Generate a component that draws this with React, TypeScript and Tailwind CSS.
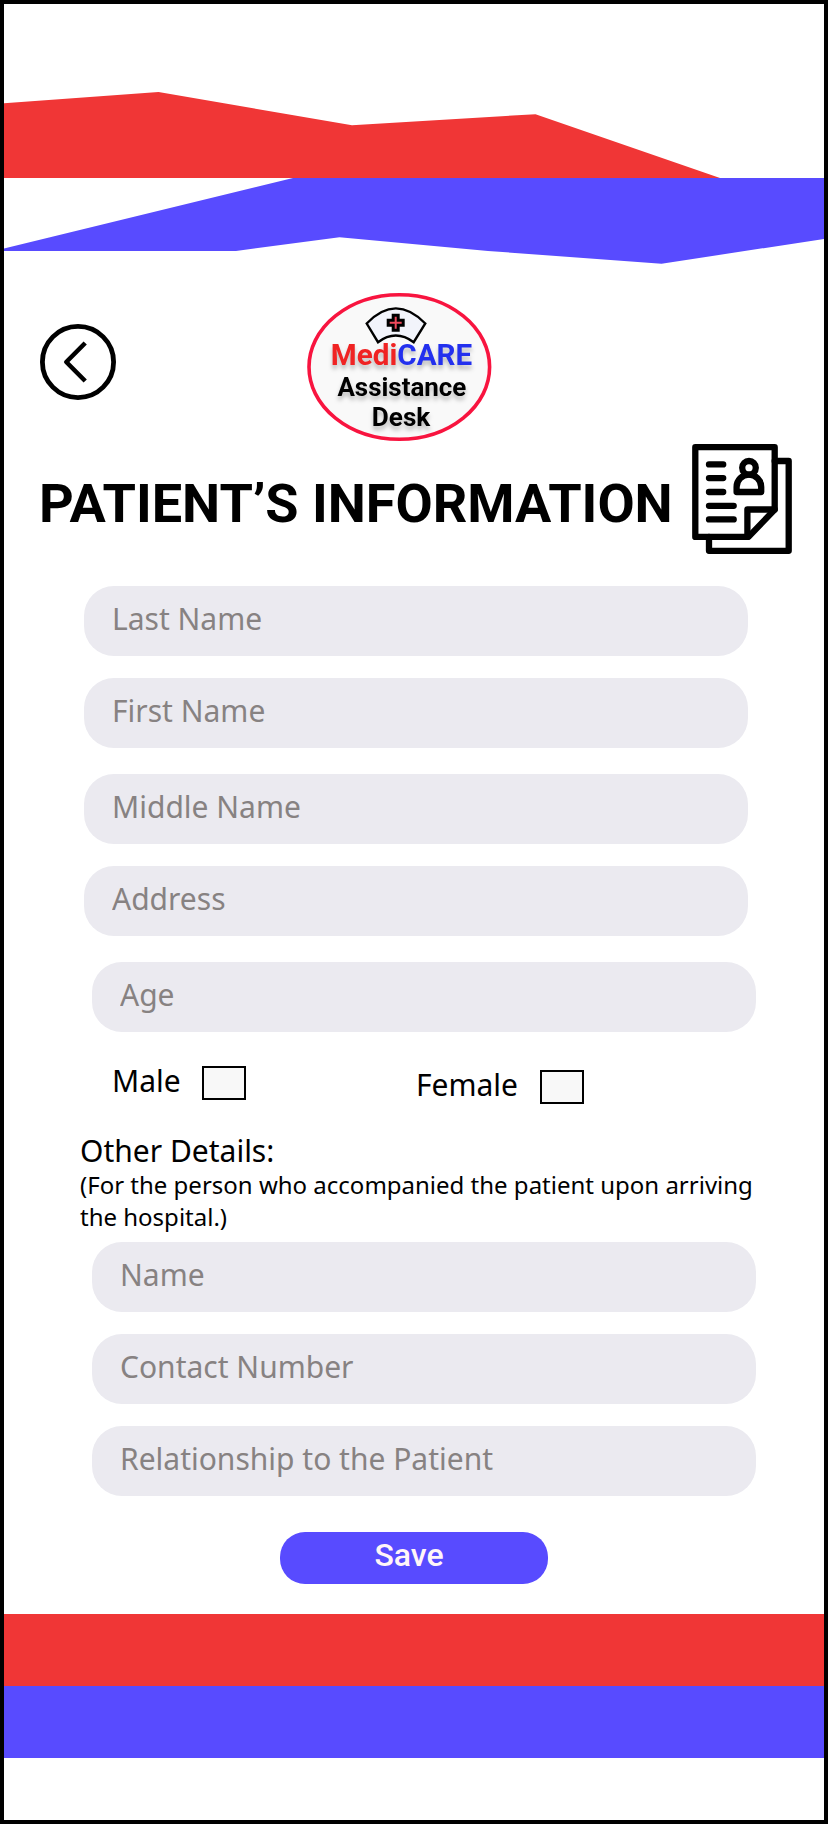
import React from "react";

function Field({ label, className = "" }: { label: string; className?: string }) {
  return (
    <input
      type="text"
      placeholder={label}
      className={`block h-[70px] w-[664px] rounded-[30px] bg-[#ebeaf0] px-7 pb-[5px] text-[30px] text-black outline-none placeholder:text-[#878282] placeholder:opacity-100 ${className}`}
    />
  );
}

function Choice({ label, className = "" }: { label: string; className?: string }) {
  return (
    <label className={`flex items-start justify-between ${className}`}>
      <span className="text-[30px] leading-[41px]">{label}</span>
      <input
        type="checkbox"
        className="mt-1.5 h-[34px] w-11 appearance-none border-2 border-black bg-[#f8f8f8] checked:bg-[#584bff]"
      />
    </label>
  );
}

function Banner() {
  return (
    <svg className="block h-[260px] w-full" viewBox="4 4 820 260" aria-hidden="true">
      <polygon fill="#f03636" points="4,103.3 158.5,92 352,125.3 535.5,114.2 720,178 4,178" />
      <polygon
        fill="#584bff"
        points="4,248.5 293,178 824,178 824,239 661.5,263.7 488,251 339.5,237.3 236,251 4,251"
      />
    </svg>
  );
}

function BackButton() {
  return (
    <button type="button" aria-label="Back" className="mt-[31px] h-[76px] w-[76px]">
      <svg viewBox="0 0 76 76" className="block h-full w-full" fill="none" stroke="#000">
        <circle cx="38" cy="38" r="35.6" strokeWidth="4.8" />
        <path d="M45.2 19 26.3 38l18.9 19" strokeWidth="4.6" strokeLinejoin="round" />
      </svg>
    </button>
  );
}

function Logo() {
  return (
    <svg viewBox="0 0 185 148" className="block h-[148px] w-[185px]">
      <ellipse cx="92.3" cy="74" rx="90.3" ry="72.2" fill="#f9f9f9" stroke="#f8143f" strokeWidth="3.6" />
      <path
        d="M59.7 30.5Q88.7 .3 118.3 30.5L106.7 49.2Q88.7 35.8 71 49.2Z"
        fill="#f2f4fb"
        stroke="#000"
        strokeWidth="2.4"
      />
      <path
        d="M86.2 22.2h5v5h5v5h-5v5h-5v-5h-5v-5h5z"
        fill="#f04a5c"
        stroke="#000"
        strokeWidth="3"
      />
      <g className="font-[Roboto,sans-serif] font-bold [filter:drop-shadow(0_4px_2px_rgba(0,0,0,0.25))]">
        <text x="23.8" y="72" fontSize="29.5" textLength="141.4" lengthAdjust="spacingAndGlyphs">
          <tspan fill="#f02323">Medi</tspan>
          <tspan fill="#2330ee">CARE</tspan>
        </text>
        <text x="30.4" y="102.7" fontSize="26" textLength="129" lengthAdjust="spacingAndGlyphs">
          Assistance
        </text>
        <text x="64.8" y="132.7" fontSize="26" textLength="58.5" lengthAdjust="spacingAndGlyphs">
          Desk
        </text>
      </g>
    </svg>
  );
}

function RecordIcon() {
  return (
    <svg
      viewBox="0 0 100 110"
      className="block h-[110px] w-[100px]"
      fill="none"
      stroke="#000"
      strokeWidth="6.3"
      strokeLinecap="round"
      strokeLinejoin="round"
      aria-hidden="true"
    >
      <path d="M3.3 3.2H82.7V65.5L56.5 92.9H3.3z" />
      <path d="M55.4 92.9V65.5H82.7" />
      <path d="M82.7 17H96.7V106.8H17V92.9" />
      <path d="M17 20.4H31.2M17 34.1H31.2M17 48H31.2M17 61.8H41.7M17 75.4H41.7" />
      <circle cx="57" cy="23.8" r="6.8" />
      <path d="M44.6 48V43A12.3 12.3 0 0 1 69.2 43V48z" />
    </svg>
  );
}

export default function App() {
  return (
    <main className="flex h-[1824px] w-[828px] flex-col overflow-hidden border-4 border-black bg-white font-['Noto_Sans',sans-serif] text-black">
      <Banner />

      <header className="mt-[29px] flex h-[151px] items-start gap-[191px] pl-9">
        <BackButton />
        <Logo />
      </header>

      <div className="flex h-[110px] items-start pl-[35px]">
        <h1 className="mt-[28px] w-[653px] font-[Roboto,sans-serif] text-[54px] leading-[64px] font-bold whitespace-nowrap">
          PATIENT’S INFORMATION
        </h1>
        <RecordIcon />
      </div>

      <form className="flex flex-col">
        <div className="mt-8 ml-20 flex flex-col">
          <Field label="Last Name" />
          <Field label="First Name" className="mt-[22px]" />
          <Field label="Middle Name" className="mt-[26px]" />
          <Field label="Address" className="mt-[22px]" />
          <Field label="Age" className="mt-[26px] ml-2" />
        </div>

        <div className="mt-7 ml-[108px] flex items-start gap-[170px]">
          <Choice label="Male" className="w-[134px]" />
          <Choice label="Female" className="mt-1 w-[168px]" />
        </div>

        <section className="mt-[25px] ml-[76px] w-[690px]">
          <h2 className="text-[30px] leading-[41px]">Other Details:</h2>
          <p className="-mt-0.5 text-[24px] leading-8">
            (For the person who accompanied the patient upon arriving
            <br />
            the hospital.)
          </p>
        </section>

        <div className="mt-[9px] ml-[88px] flex flex-col gap-[22px]">
          <Field label="Name" />
          <Field label="Contact Number" />
          <Field label="Relationship to the Patient" />
        </div>

        <button
          type="button"
          className="mt-9 ml-[276px] h-[52px] w-[268px] rounded-[25px] bg-[#584bff] pr-[10px] pb-[6px] font-[Roboto,sans-serif] text-[32px] leading-[38px] font-medium text-[#fff5f8]"
        >
          Save
        </button>
      </form>

      <footer className="mt-[30px]">
        <div className="h-[72px] bg-[#f03636]" />
        <div className="h-[72px] bg-[#584bff]" />
      </footer>
    </main>
  );
}
